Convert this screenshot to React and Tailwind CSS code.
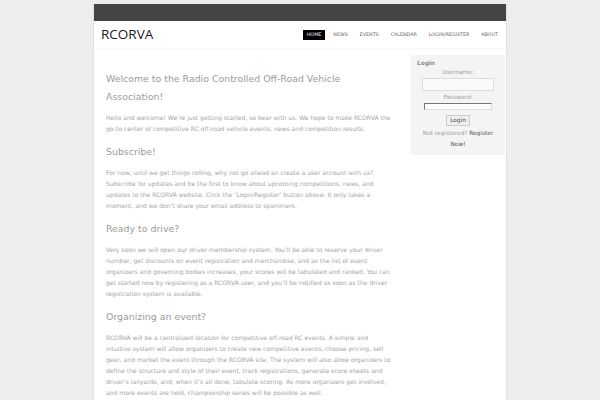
const NAV = ['Home', 'News', 'Events', 'Calendar', 'Login/Register', 'About']

const SECTIONS = [
  {
    title: 'Welcome to the Radio Controlled Off-Road Vehicle Association!',
    body: "Hello and welcome! We’re just getting started, so bear with us. We hope to make RCORVA the go-to center of competitive RC off-road vehicle events, news and competition results.",
  },
  {
    title: 'Subscribe!',
    body: "For now, until we get things rolling, why not go ahead an create a user account with us? Subscribe for updates and be the first to know about upcoming competitions, news, and updates to the RCORVA website. Click the ‘Login/Register’ button above. It only takes a moment, and we don’t share your email address to spammers.",
  },
  {
    title: 'Ready to drive?',
    body: "Very soon we will open our driver membership system. You’ll be able to reserve your driver number, get discounts on event registration and merchandise, and as the list of event organizers and governing bodies increases, your scores will be tabulated and ranked. You can get started now by registering as a RCORVA user, and you’ll be notified as soon as the driver registration system is available.",
  },
  {
    title: 'Organizing an event?',
    body: "RCORVA will be a centralized location for competitive off-road RC events. A simple and intuitive system will allow organizers to create new competitive events, choose pricing, sell gear, and market the event through the RCORVA site. The system will also allow organizers to define the structure and style of their event, track registrations, generate score sheets and driver’s lanyards, and, when it’s all done, tabulate scoring. As more organizers get involved, and more events are held, championship series will be possible as well.",
  },
]

export default function App() {
  return (
    <div className="min-h-screen bg-[#eeeeee] pt-[4px] font-['DejaVu_Sans',sans-serif]">
      <div className="mx-auto w-[414px] border-l border-r border-[#e2e2e2] bg-white">
        {/* top bar */}
        <div className="h-[17px] bg-[#444444]" />

        {/* header */}
        <div className="flex h-[27px] items-center justify-between pl-[7px] pr-[4px] shadow-[0_1px_2px_rgba(0,0,0,0.04)]">
          <span className="font-['Open_Sans',sans-serif] text-[13.5px] leading-none text-[#1a1a1a]">RCORVA</span>
          <nav className="flex items-center gap-[4px]">
            {NAV.map((n, i) => (
              <span
                key={n}
                className={`px-[4px] py-[3px] text-[4.8px] uppercase leading-[4px] ${
                  i === 0 ? 'bg-black text-white' : 'text-[#666666]'
                }`}
              >
                {n}
              </span>
            ))}
          </nav>
        </div>

        {/* body */}
        <div className="flex items-start justify-between pl-[12px] pr-[1px] pt-[7px]">
          <div className="w-[287px] pt-[15px]">
            {SECTIONS.map((s) => (
              <div key={s.title} className="mb-[9px]">
                <h2 className="mb-[6px] text-[9.4px] font-normal leading-[18px] text-[#9b9b9b]">{s.title}</h2>
                <p className="text-[6.05px] leading-[11px] text-[#a5a5a5]">{s.body}</p>
              </div>
            ))}
          </div>

          <aside className="w-[94px] bg-[#f4f4f4] px-[6px] pb-[5px] pt-[3px] text-[5.8px] text-[#a0a0a0]">
            <p className="font-bold leading-[10px] text-[#8c8c8c]">Login</p>
            <div className="flex flex-col items-center">
              <span className="leading-[9px]">Username:</span>
              <div className="mt-[1px] h-[13px] w-[72px] border border-[#dddddd] bg-[#fafafa]" />
              <span className="mt-[1px] leading-[10px]">Password:</span>
              <div className="mt-[1px] h-[7px] w-[68px] border border-t-[#777777] border-l-[#777777] border-r-[#dddddd] border-b-[#dddddd] bg-white" />
              <span className="mt-[5px] border border-[#cccccc] bg-[#f0f0f0] px-[3px] py-[1px] leading-[7px] text-[#444444]">
                Login
              </span>
              <p className="mt-[2px] text-center leading-[11px]">
                Not registered? <span className="text-[#555555]">Register</span>
              </p>
              <p className="text-center leading-[11px] text-[#555555]">Now!</p>
            </div>
          </aside>
        </div>
      </div>
    </div>
  )
}
